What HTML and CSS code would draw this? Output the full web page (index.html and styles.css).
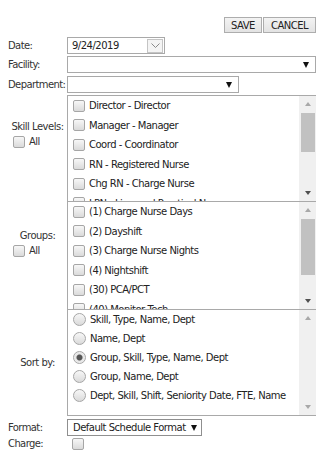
FILE: index.html
```html
<!DOCTYPE html>
<html lang="en">
<head>
  <meta charset="UTF-8">
  <title>Schedule Report</title>
  <link rel="stylesheet" href="styles.css">
</head>
<body>
  <div class="page">
    <div class="actions">
      <button class="btn btn-save">SAVE</button>
      <button class="btn btn-cancel">CANCEL</button>
    </div>

    <div class="row row-date">
      <span class="lbl">Date:</span>
      <div class="datebox">
        <span>9/24/2019</span>
        <span class="cal-btn">
          <svg width="9" height="6" viewBox="0 0 9 6"><polyline points="0.5,0.5 4.5,4.5 8.5,0.5" fill="none" stroke="#8a8a8a" stroke-width="1"/></svg>
        </span>
      </div>
    </div>

    <div class="row row-facility">
      <span class="lbl">Facility:</span>
      <div class="select select-facility"><span></span><span class="arrow"></span></div>
    </div>

    <div class="row row-dept">
      <span class="lbl">Department:</span>
      <div class="select select-dept"><span></span><span class="arrow"></span></div>
    </div>

    <div class="row row-list">
      <div class="list-label label-skill">
        <div>Skill Levels:</div>
        <label class="all"><input type="checkbox" class="cb">All</label>
      </div>
      <div class="list list-skill">
        <div class="list-items">
          <label class="opt"><input type="checkbox" class="cb">Director - Director</label>
          <label class="opt"><input type="checkbox" class="cb">Manager - Manager</label>
          <label class="opt"><input type="checkbox" class="cb">Coord - Coordinator</label>
          <label class="opt"><input type="checkbox" class="cb">RN - Registered Nurse</label>
          <label class="opt"><input type="checkbox" class="cb">Chg RN - Charge Nurse</label>
          <label class="opt"><input type="checkbox" class="cb">LPN - Licensed Practical Nurse</label>
          <label class="opt"><input type="checkbox" class="cb">CNA - Certified Nursing Assistant</label>
        </div>
        <div class="sbar">
          <span class="sbtn up off"></span>
          <div class="strack"><div class="sthumb thumb-skill"></div></div>
          <span class="sbtn down"></span>
        </div>
      </div>
    </div>

    <div class="row row-list">
      <div class="list-label label-groups">
        <div>Groups:</div>
        <label class="all"><input type="checkbox" class="cb">All</label>
      </div>
      <div class="list list-groups">
        <div class="list-items">
          <label class="opt"><input type="checkbox" class="cb">(1) Charge Nurse Days</label>
          <label class="opt"><input type="checkbox" class="cb">(2) Dayshift</label>
          <label class="opt"><input type="checkbox" class="cb">(3) Charge Nurse Nights</label>
          <label class="opt"><input type="checkbox" class="cb">(4) Nightshift</label>
          <label class="opt"><input type="checkbox" class="cb">(30) PCA/PCT</label>
          <label class="opt"><input type="checkbox" class="cb">(40) Monitor Tech</label>
        </div>
        <div class="sbar">
          <span class="sbtn up off"></span>
          <div class="strack"><div class="sthumb thumb-groups"></div></div>
          <span class="sbtn down"></span>
        </div>
      </div>
    </div>

    <div class="row row-list">
      <div class="list-label label-sort">
        <div>Sort by:</div>
      </div>
      <div class="list list-sort">
        <div class="list-items">
          <label class="opt opt-radio"><input type="radio" name="sort" class="rd">Skill, Type, Name, Dept</label>
          <label class="opt opt-radio"><input type="radio" name="sort" class="rd">Name, Dept</label>
          <label class="opt opt-radio"><input type="radio" name="sort" class="rd" checked>Group, Skill, Type, Name, Dept</label>
          <label class="opt opt-radio"><input type="radio" name="sort" class="rd">Group, Name, Dept</label>
          <label class="opt opt-radio"><input type="radio" name="sort" class="rd">Dept, Skill, Shift, Seniority Date, FTE, Name</label>
        </div>
        <div class="sbar">
          <span class="sbtn up off"></span>
          <div class="strack"></div>
          <span class="sbtn down off"></span>
        </div>
      </div>
    </div>

    <div class="row row-format">
      <span class="lbl">Format:</span>
      <div class="select select-format"><span>Default Schedule Format</span><span class="arrow"></span></div>
    </div>

    <div class="row row-charge">
      <span class="lbl">Charge:</span>
      <input type="checkbox" class="cb charge-cb">
    </div>
  </div>
</body>
</html>
```

FILE: styles.css
```css
body {
  margin: 0;
  font-family: "DejaVu Sans", Verdana, sans-serif;
  font-size: 10px;
  letter-spacing: -0.5px;
  color: #333;
  background: #fff;
}

.page {
  padding: 17px 16px 0 8px;
}

/* top buttons */
.actions {
  display: flex;
  justify-content: flex-end;
  gap: 1px;
  margin-bottom: 4px;
}

.btn {
  font: inherit;
  letter-spacing: inherit;
  color: #222;
  height: 16px;
  padding: 0;
  border: 1px solid #adadad;
  background: linear-gradient(#f3f3f3, #e3e3e3);
}
.btn-save { width: 38px; }
.btn-cancel { width: 53px; }

/* form rows */
.row {
  display: flex;
  align-items: center;
}

.lbl {
  width: 59px;
  flex: none;
  white-space: nowrap;
  letter-spacing: -0.6px;
}

.row-date { height: 17px; margin-bottom: 2px; }
.row-facility { height: 17px; margin-bottom: 3px; }
.row-dept { height: 17px; margin-bottom: 2px; }

.datebox {
  width: 98px;
  height: 17px;
  box-sizing: border-box;
  border: 1px solid #a9a9a9;
  display: flex;
  align-items: center;
  padding-left: 4px;
  color: #222;
}

.cal-btn {
  margin-left: auto;
  margin-right: 1px;
  width: 16px;
  height: 14px;
  box-sizing: border-box;
  border: 1px solid #c4c4c4;
  background: #f4f4f4;
  display: flex;
  align-items: center;
  justify-content: center;
}

.select {
  height: 17px;
  box-sizing: border-box;
  border: 1px solid #a9a9a9;
  display: flex;
  align-items: center;
  justify-content: space-between;
  padding: 0 6px 0 5px;
  background: #fff;
  color: #222;
  white-space: nowrap;
}

.select .arrow {
  width: 0;
  height: 0;
  border-left: 3.5px solid transparent;
  border-right: 3.5px solid transparent;
  border-top: 6px solid #111;
}

.select-facility { width: 249px; }
.select-dept { width: 172px; }
.select-format {
  padding: 0 4px 0 5px;
  justify-content: flex-start;
  gap: 5px;
  border-color: #8f8f8f;
}

/* list boxes */
.row-list {
  align-items: stretch;
}
.row-list + .row-list {
  margin-top: -1px;
}

.list-label {
  width: 59px;
  flex: none;
  text-align: center;
  line-height: 14px;
}
.label-skill { padding-top: 25px; }
.label-groups { padding-top: 28px; }
.label-sort {
  display: flex;
  align-items: center;
  justify-content: center;
}

.all {
  display: flex;
  align-items: center;
  gap: 4px;
  padding-left: 5px;
  margin-top: 1px;
}

.list {
  width: 249px;
  box-sizing: border-box;
  border: 1px solid #a9a9a9;
  border-right: none;
  display: flex;
  color: #222;
}
.list-skill { height: 107px; }
.list-groups { height: 109px; }
.list-sort { height: 107px; }

.list-items {
  flex: 1;
  min-width: 0;
  overflow: hidden;
}

.opt {
  display: flex;
  align-items: center;
  gap: 4px;
  height: 19.5px;
  padding-left: 5px;
  white-space: nowrap;
}
.opt-radio { height: 19px; }

/* fake classic scrollbar */
.sbar {
  width: 17px;
  flex: none;
  background: #f0f0f0;
  display: flex;
  flex-direction: column;
}
.sbtn {
  height: 16px;
  flex: none;
  display: flex;
  align-items: center;
  justify-content: center;
}
.sbtn::before {
  content: "";
  width: 0;
  height: 0;
  border-left: 3.5px solid transparent;
  border-right: 3.5px solid transparent;
}
.sbtn.up::before { border-bottom: 4px solid #505050; }
.sbtn.down::before { border-top: 4px solid #505050; }
.sbtn.up.off::before { border-bottom-color: #a8a8a8; }
.sbtn.down.off::before { border-top-color: #a8a8a8; }

.strack {
  flex: 1;
  padding: 1px 1px 0 2px;
}
.sthumb {
  background: #c1c1c1;
}
.thumb-skill { height: 39px; }
.thumb-groups { height: 56px; }

/* old style checkbox / radio */
.cb,
.rd {
  appearance: none;
  -webkit-appearance: none;
  flex: none;
  width: 12px;
  height: 12px;
  margin: 0;
  border: 1px solid #a6a6a6;
  border-radius: 2px;
  background: linear-gradient(#f7f7f7, #dadada);
}
.rd {
  border-radius: 50%;
  width: 13px;
  height: 13px;
}
.rd:checked {
  background: radial-gradient(circle, #555 0, #555 2.5px, #e4e4e4 3.5px, #f0f0f0 6px);
}

.row-format { height: 17px; margin-top: 3px; }
.row-charge { height: 13px; margin-top: 1px; }
.charge-cb { margin-left: 5px; }
```
